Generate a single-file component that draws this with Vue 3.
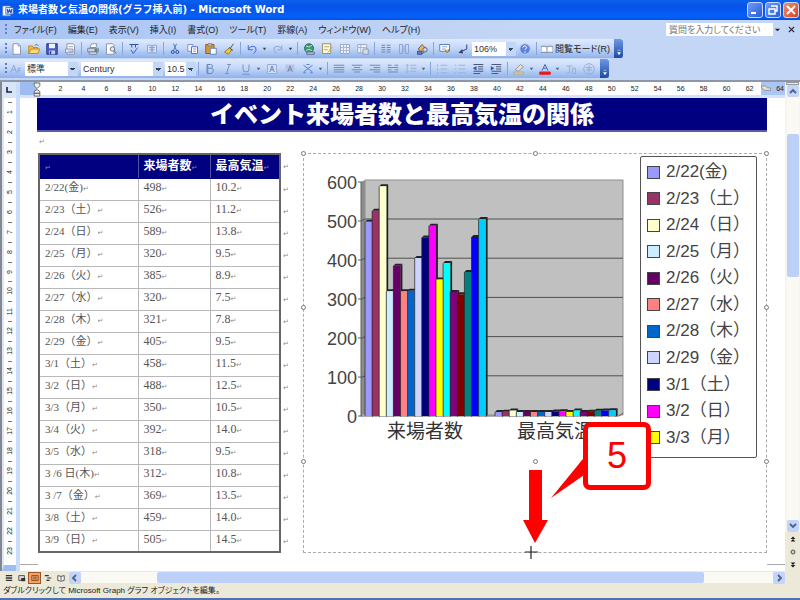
<script setup>
const menus = ['ファイル(F)', '編集(E)', '表示(V)', '挿入(I)', '書式(O)', 'ツール(T)', '罫線(A)', 'ウィンドウ(W)', 'ヘルプ(H)']

const navy = '#2f4f9f'
const faint = '#8ea4d0'

/* Each icon is a list of [path, fill, stroke] drawn on a 16 x 16 grid. */
const icons = {
  new: [['M4 1h7l3 3v11h-10z', '#fff', '#8c94b0'], ['M11 1v3h3', '#dde4f4', '#8c94b0']],
  open: [['M1 14V4h5l1 2h6v8z', '#f2c14a', '#c08a20'], ['M1 14l3-6h12l-3 6z', '#ffd978', '#c08a20'], ['M9 3q3-3 5 1', 'none', '#5b8a4a']],
  save: [['M1 1h14v14h-14z', '#4a5cc0', '#2c3a90'], ['M4 1h8v6h-8z', '#eef2ff', 'none'], ['M4 10h8v5h-8z', '#c4cdf2', 'none'], ['M5 11h2v4h-2z', '#2c3a90', 'none']],
  permission: [['M4 1h8l2 2v12h-10z', '#fff', '#8c94b0'], ['M2 8h10v5h-10z', '#e2e6f0', '#8c94b0'], ['M6 5h6M6 11h6', 'none', '#9aa']],
  print: [['M4 6l2-5h7l-1 5z', '#fff', '#8c94b0'], ['M1 7h14v5h-14z', '#cdd2e0', '#767f9c'], ['M3 12h10v3h-10z', '#e9ecf6', '#767f9c'], ['M10 8h4v4h-4z', '#3d9c58', 'none']],
  preview: [['M2 1h8l2 2v12h-10z', '#fff', '#8c94b0'], ['M7 8a3 3 0 1 0 6 0a3 3 0 1 0-6 0', '#d6ecf8', '#777'], ['M12 10l3 4', 'none', '#a06a30']],
  spell: [['M2 2h12M5 2v4M10 2v4', 'none', navy], ['M4 9l3 5l6-8', 'none', '#3260cc']],
  research: [['M2 3h5v10h-5zM9 3h5v10h-5z', '#dfe5f4', faint], ['M4 6h8M4 9h8', 'none', faint]],
  cut: [['M6 1l4 9M10 1l-4 9', 'none', '#5273b8'], ['M3 12a2 2 0 1 0 4 0a2 2 0 1 0-4 0M9 12a2 2 0 1 0 4 0a2 2 0 1 0-4 0', 'none', '#294a9c']],
  copy: [['M1 2h7v9h-7z', '#eef3ff', '#7e95c8'], ['M6 5h8v9h-8z', '#fff', '#5673b4'], ['M8 8h4M8 11h4', 'none', '#7e95c8']],
  paste: [['M1 2h11v12h-11z', '#d79a2e', '#92601a'], ['M4 1h5v3h-5z', '#dcdcdc', '#777'], ['M7 7h8v8h-8z', '#fff', '#667fb5']],
  brush: [['M14 1l-5 7', 'none', '#70501c'], ['M9 6l3 3l-5 6l-5-3z', '#f2c53d', '#9b7a20'], ['M8 6l5 4', 'none', '#555']],
  undo: [['M3 3v6h6', 'none', '#3465d2'], ['M3 8q5-6 10-2q2 5-3 8', 'none', '#3465d2']],
  redo: [['M13 3v6h-6', 'none', faint], ['M13 8q-5-6-10-2q-2 5 3 8', 'none', faint]],
  link: [['M2 7a6 6 0 1 0 12 0a6 6 0 1 0-12 0', '#3c9a70', '#2d6d70'], ['M4 4q4 3 8-1M4 10q4-3 8 0', 'none', '#b9e4c5'], ['M5 12h10v3h-10z', '#c6cfe0', '#59698c']],
  borders: [['M2 1h11v13h-11z', '#fffbe0', '#9a8f60'], ['M4 5h7M4 9h5', 'none', '#b0a878'], ['M15 5l-6 8', 'none', '#d99a22']],
  table: [['M2 2h12v12h-12z', '#eef1f8', '#9aa8c8'], ['M2 6h12M2 10h12M6 2v12M10 2v12', 'none', '#a9b4d0']],
  sheet: [['M1 2h12v11h-12z', '#eef1f8', '#9aa8c8'], ['M1 6h12M5 2v11', 'none', '#a9b4d0'], ['M8 8h7v7h-7z', '#d9dde6', '#8c98b4']],
  columns: [['M2 3h5M2 6h5M2 9h5M2 12h5M9 3h5M9 6h5M9 9h5M9 12h5', 'none', '#6681bd']],
  direction: [['M2 2h4v12h-4zM10 2h4v12h-4z', 'none', faint], ['M8 3v9', 'none', faint]],
  drawing: [['M3 8l5-6l6 6l-5 6z', '#f2b646', '#6a6070'], ['M2 11h6v4h-6z', '#6a7ed2', '#3b4b90'], ['M9 9a3 3 0 1 0 6 0a3 3 0 1 0-6 0', '#c4d0e8', '#5a668a']],
  map: [['M1 2h13v9h-13z', '#fff', '#5d7cb8'], ['M4 5h7M4 8h5', 'none', '#8ea4d0'], ['M8 9l3 4l3-5', '#f0cd52', '#8b7a30']],
  marks: [['M13 2v6l-9 4', 'none', '#34406a'], ['M7 8l-5 5l6 1z', '#34406a', 'none']],
  help: [['M1 8a7 7 0 1 0 14 0a7 7 0 1 0-14 0', '#5d83dc', '#b8caf0'], ['M5 6q1-3 4-2q3 2-1 5M8 11v2', 'none', '#fff']],
  book: [['M0 5q4-2 8 0q4-2 8 0v8q-4-2-8 0q-4-2-8 0z', '#fff', '#808898'], ['M8 5v8', 'none', '#808898']],
  styles: [['M1 13l4-10l4 10M3 9h5', 'none', '#8aa5dd'], ['M11 13v-6h4M11 10h3', 'none', '#8aa5dd']],
  bold: [['M4 2h5q4 1 1 5q5 2 0 7h-6zM5 7h5M5 3v10', 'none', '#6883bd']],
  italic: [['M7 2h5M10 2l-4 12M4 14h5', 'none', '#7890c4']],
  underline: [['M4 2v6q0 4 4 4q4 0 4-4v-6M3 15h10', 'none', '#7890c4']],
  boxA: [['M2 2h12v12h-12z', '#cfdcf5', '#9aaed8'], ['M5 12l3-8l3 8M6 9h4', 'none', '#7288b8']],
  shadeA: [['M2 2h12v12h-12z', '#b4c3e6', 'none'], ['M5 12l3-8l3 8M6 9h4', 'none', '#7288b8']],
  scale: [['M2 3l12 9M14 3l-12 9', 'none', '#5c7cc4'], ['M6 2h4M2 13h3M11 13h3', 'none', '#5c7cc4']],
  justify: [['M1 3h14M1 6h14M1 9h14M1 12h14', 'none', '#7187b6']],
  center: [['M1 3h14M4 6h8M1 9h14M4 12h8', 'none', '#7187b6']],
  right: [['M1 3h14M6 6h9M1 9h14M6 12h9', 'none', '#7187b6']],
  spread: [['M1 3h5M10 3h5M1 6h14M1 9h5M10 9h5M1 12h14', 'none', '#7187b6']],
  spacing: [['M7 3h8M7 7h8M7 11h8M3 2v11M1 4l2-2l2 2M1 11l2 2l2-2', 'none', '#9fb0d6']],
  numbers: [['M6 3h9M6 8h9M6 13h9M2 2v3M2 7v3M2 12v3', 'none', '#9fb0d6']],
  bullets: [['M6 3h9M6 8h9M6 13h9M1 3h2M1 8h2M1 13h2', 'none', '#9fb0d6']],
  outdent: [['M2 2h13M8 5h7M8 8h7M2 11h13M2 14h9', 'none', '#4a5470'], ['M6 4v6l-5-3z', '#3558b0', 'none']],
  indent: [['M2 2h13M8 5h7M8 8h7M2 11h13M2 14h9', 'none', '#4a5470'], ['M1 4v6l5-3z', '#3558b0', 'none']],
  highlight: [['M3 9l7-7l4 3l-7 6z', '#e8e3c8', '#9097a8'], ['M1 12h13v3h-13z', '#d8cf9c', '#b0ad98']],
  color: [['M4 10l4-8l4 8M6 7h4', 'none', '#4464b0'], ['M1 12h14v3h-14z', '#e81c24', '#e81c24']],
  ruby: [['M2 4h8M6 4v8M3 13h4M10 7h4v7h-4z', 'none', '#98acd6']],
  enclose: [['M1 8a7 7 0 1 0 14 0a7 7 0 1 0-14 0', 'none', '#98acd6'], ['M4 6h8M4 9h8M8 3v10', 'none', '#98acd6']],
}

const standardBar = 'new open save permission | print preview | spell research | cut copy paste brush | undo v redo v | link borders table sheet | columns direction drawing | map marks'.split(' ')
const formatBar = 'bold italic underline v boxA shadeA scale v | justify center right spread spacing v | numbers bullets outdent indent | highlight v color v ruby enclose'.split(' ')

const hTicks = Array.from({ length: 31 }, (_, i) => (i + 1) * 2)
const vTicks = Array.from({ length: 23 }, (_, i) => i + 1)

const rows = [
  ['2/22(金)', 498, '10.2', '#9999ff'],
  ['2/23（土）', 526, '11.2', '#993366'],
  ['2/24（日）', 589, '13.8', '#ffffcc'],
  ['2/25（月）', 320, '9.5', '#ccecff'],
  ['2/26（火）', 385, '8.9', '#660066'],
  ['2/27（水）', 320, '7.5', '#ff8080'],
  ['2/28（木）', 321, '7.8', '#0066cc'],
  ['2/29（金）', 405, '9.5', '#ccd4ff'],
  ['3/1（土）', 458, '11.5', '#000080'],
  ['3/2（日）', 488, '12.5', '#ff00ff'],
  ['3/3（月）', 350, '10.5', '#ffff00'],
  ['3/4（火）', 392, '14.0', '#00ffff'],
  ['3/5（水）', 318, '9.5', '#800080'],
  ['3 /6 日(木)', 312, '10.8', '#800000'],
  ['3 /7（金）', 369, '13.5', '#008080'],
  ['3/8（土）', 459, '14.0', '#0000ff'],
  ['3/9（日）', 505, '14.5', '#00ccff'],
]
const legend = rows.slice(0, 11)

const base = 262
const unit = 0.39
const pitch = 7.1
const bars = [1, 2].flatMap((column, group) =>
  rows.map((row, i) => {
    const h = Math.max(4, Number(row[column]) * unit)
    return { x: 61 + group * 130 + i * pitch, y: base - h, h, color: row[3] }
  })
)
const axis = [0, 100, 200, 300, 400, 500, 600]
const lineY = (v) => base - 2 - v * 0.392
</script>

<template>
  <div class="window">
    <header class="titlebar">
      <svg class="app-icon" viewBox="0 0 16 16"><path d="M1 2h10v13h-10z" fill="#fff" stroke="#6b8fd6" /><path d="M5 4h10v9h-10z" fill="#dce8ff" stroke="#345eb8" /><path d="M7 6l1 5l2-4l2 4l1-5" fill="none" stroke="#2450b0" stroke-width="1.5" /></svg>
      <h1>来場者数と気温の関係(グラフ挿入前) - Microsoft Word</h1>
      <button class="win" aria-label="最小化"><svg viewBox="0 0 14 14"><path d="M3 10h5" stroke="#fff" stroke-width="2" /></svg></button>
      <button class="win" aria-label="元に戻す"><svg viewBox="0 0 14 14"><path d="M5 3h6v5h-2M3 6h6v5h-6z" fill="none" stroke="#fff" stroke-width="1.4" /></svg></button>
      <button class="win close" aria-label="閉じる"><svg viewBox="0 0 14 14"><path d="M3 3l8 8M11 3l-8 8" stroke="#fff" stroke-width="2" /></svg></button>
    </header>

    <nav class="menubar">
      <span class="grip"></span>
      <button v-for="m in menus" :key="m" class="menu">{{ m }}</button>
      <input class="ask" type="text" placeholder="質問を入力してください" aria-label="質問を入力してください" />
      <button class="tiny" aria-label="質問の一覧"><svg viewBox="0 0 8 8"><path d="M1 3h6l-3 3z" fill="#223" /></svg></button>
      <button class="tiny doc-close" aria-label="文書を閉じる"><svg viewBox="0 0 8 8"><path d="M1 1l6 6M7 1l-6 6" stroke="#223" stroke-width="1.4" /></svg></button>
    </nav>

    <div class="bars">
      <div class="toolbar">
        <span class="grip"></span>
        <template v-for="(name, i) in standardBar" :key="i">
          <span v-if="name === '|'" class="sep"></span>
          <button v-else-if="name === 'v'" class="arrow" aria-label="一覧"><svg viewBox="0 0 8 8"><path d="M2 3h4l-2 3z" fill="#345" /></svg></button>
          <button v-else class="tool" :aria-label="name"><svg viewBox="0 0 16 16"><path v-for="(s, k) in icons[name]" :key="k" :d="s[0]" :fill="s[1]" :stroke="s[2]" stroke-width="1.3" /></svg></button>
        </template>
        <select class="combo zoom" aria-label="ズーム"><option>106%</option></select>
        <button class="tool" aria-label="ヘルプ"><svg viewBox="0 0 16 16"><path v-for="(s, k) in icons.help" :key="k" :d="s[0]" :fill="s[1]" :stroke="s[2]" stroke-width="1.3" /></svg></button>
        <span class="sep"></span>
        <button class="reading"><svg viewBox="0 0 16 16"><path v-for="(s, k) in icons.book" :key="k" :d="s[0]" :fill="s[1]" :stroke="s[2]" stroke-width="1.3" /></svg>閲覧モード(R)</button>
        <button class="cap" aria-label="ツールバーのオプション"><svg viewBox="0 0 8 8"><path d="M2 1h4M2 4h4l-2 3z" fill="#fff" stroke="#fff" stroke-width="0.6" /></svg></button>
      </div>
      <div class="toolbar">
        <span class="grip"></span>
        <button class="tool" aria-label="スタイルと書式"><svg viewBox="0 0 16 16"><path v-for="(s, k) in icons.styles" :key="k" :d="s[0]" :fill="s[1]" :stroke="s[2]" stroke-width="1.3" /></svg></button>
        <select class="combo style" aria-label="スタイル"><option>標準</option></select>
        <select class="combo font" aria-label="フォント"><option>Century</option></select>
        <select class="combo size" aria-label="フォント サイズ"><option>10.5</option></select>
        <span class="sep"></span>
        <template v-for="(name, i) in formatBar" :key="i">
          <span v-if="name === '|'" class="sep"></span>
          <button v-else-if="name === 'v'" class="arrow" aria-label="一覧"><svg viewBox="0 0 8 8"><path d="M2 3h4l-2 3z" fill="#567" /></svg></button>
          <button v-else class="tool" :aria-label="name"><svg viewBox="0 0 16 16"><path v-for="(s, k) in icons[name]" :key="k" :d="s[0]" :fill="s[1]" :stroke="s[2]" stroke-width="1.3" /></svg></button>
        </template>
        <button class="cap" aria-label="ツールバーのオプション"><svg viewBox="0 0 8 8"><path d="M2 1h4M2 4h4l-2 3z" fill="#fff" stroke="#fff" stroke-width="0.6" /></svg></button>
      </div>
    </div>

    <div class="workspace">
      <div class="left-rail">
        <button class="tab-kind" aria-label="タブの種類"><svg viewBox="0 0 8 8"><path d="M2 1v5h5" fill="none" stroke="#223" stroke-width="1.6" /></svg></button>
        <div class="vruler">
          <span v-for="n in vTicks" :key="n" class="vtick"><i></i><b>{{ n }}</b></span>
        </div>
      </div>

      <main class="sheet">
        <div class="hruler">
          <div class="margin-left">
            <svg class="marker" viewBox="0 0 8 16"><path d="M1 1h6v3l-3 3l-3-3zM4 8l3 2v2h-6v-2zM1 12h6v3h-6z" fill="#f1efe4" stroke="#666" /></svg>
          </div>
          <div class="ticks"><span v-for="n in hTicks" :key="n">{{ n }}</span></div>
          <div class="margin-right">
            <svg class="marker end" viewBox="0 0 16 10"><path d="M1 1h6l3 3h5v4h-9l-5-4z" fill="#e7e2cc" stroke="#777" /></svg>64
          </div>
        </div>

        <div class="page">
          <h2 class="banner">イベント来場者数と最高気温の関係</h2>
          <p class="blank"><span class="ret">↵</span></p>
          <div class="content">
            <table>
              <thead>
                <tr>
                  <th><span class="ret">↵</span></th>
                  <th>来場者数<span class="ret">↵</span></th>
                  <th>最高気温<span class="ret">↵</span></th>
                  <td class="row-end"><span class="ret">↵</span></td>
                </tr>
              </thead>
              <tbody>
                <tr v-for="r in rows" :key="r[0]">
                  <td>{{ r[0] }}<span class="ret">↵</span></td>
                  <td class="num">{{ r[1] }}<span class="ret">↵</span></td>
                  <td class="num">{{ r[2] }}<span class="ret">↵</span></td>
                  <td class="row-end"><span class="ret">↵</span></td>
                </tr>
              </tbody>
            </table>

            <section class="object">
              <div class="object-body">
                <svg class="plot" viewBox="0 0 336 308" role="img" aria-label="来場者数と最高気温のグラフ">
                  <path d="M57 28l4-2v234l-4 2z" fill="#8c8c8c" />
                  <path d="M61 26h258v235h-258z" fill="#c0c0c0" stroke="#909090" />
                  <path v-for="v in axis.slice(1, 6)" :key="v" :d="`M57 ${lineY(v) + 3}l4-2H319`" fill="none" stroke="#505050" />
                  <path d="M57 28v234h258l4-3" fill="none" stroke="#606060" />
                  <path v-for="v in axis" :key="'t' + v" :d="`M54 ${base - v * unit}h4`" stroke="#606060" />
                  <g v-for="(b, i) in bars" :key="i">
                    <path :d="`M${b.x + 7} ${b.y}l2-2v${b.h + 1}l-2 2z`" fill="#16241c" />
                    <path :d="`M${b.x} ${b.y}l2-2h7l-2 2z`" fill="#222" />
                    <path :d="`M${b.x} ${b.y}h7.2v${b.h}h-7.2z`" :fill="b.color" />
                    <path :d="`M${b.x} ${b.y}v${b.h}`" stroke="#222" stroke-width="0.7" />
                  </g>
                  <text v-for="v in axis" :key="'l' + v" x="53" :y="base - v * unit + 7" text-anchor="end" class="axis">{{ v }}</text>
                  <text x="121" y="284" text-anchor="middle" class="cat">来場者数</text>
                  <text x="251" y="284" text-anchor="middle" class="cat">最高気温</text>
                </svg>
                <ul class="legend">
                  <li v-for="l in legend" :key="l[0]"><span class="swatch" :style="{ background: l[3] }"></span>{{ l[0] }}</li>
                </ul>
              </div>
              <i class="handle tl"></i><i class="handle tc"></i><i class="handle tr"></i>
              <i class="handle ml"></i><i class="handle mr"></i>
              <i class="handle bl"></i><i class="handle bc"></i><i class="handle br"></i>
              <svg class="drag" viewBox="0 0 24 90"><path d="M6 0h13v50h6l-13 23l-12-23h6z" fill="#f00" /><path d="M2 82h13M8 76v13" stroke="#222" stroke-width="1.2" /></svg>
              <div class="callout">
                <svg viewBox="0 0 36 50"><path d="M0 50L36 6v19z" fill="#f00" /></svg>
                <span>5</span>
              </div>
            </section>
          </div>
          <div class="corners"><i></i><i></i></div>
        </div>
      </main>

      <div class="vscroll">
        <button class="split" aria-label="分割"></button>
        <button class="sb" aria-label="上へ"><svg viewBox="0 0 10 10"><path d="M2 7l3-3l3 3" fill="none" stroke="#4d6185" stroke-width="1.8" /></svg></button>
        <div class="vtrack"><div class="vthumb"></div></div>
        <button class="sb" aria-label="下へ"><svg viewBox="0 0 10 10"><path d="M2 3l3 3l3-3" fill="none" stroke="#4d6185" stroke-width="1.8" /></svg></button>
        <button class="browse" aria-label="前へ"><svg viewBox="0 0 10 10"><path d="M5 2l3 3h-6zM2 8l3-3l3 3z" fill="#222" /></svg></button>
        <button class="browse" aria-label="オブジェクトの選択"><svg viewBox="0 0 10 10"><circle cx="5" cy="5" r="2.5" fill="#ccc" stroke="#333" /></svg></button>
        <button class="browse" aria-label="次へ"><svg viewBox="0 0 10 10"><path d="M2 2h6l-3 3zM2 5h6l-3 3z" fill="#222" /></svg></button>
      </div>
    </div>

    <div class="hscroll">
      <button class="view" aria-label="下書き"><svg viewBox="0 0 10 10"><path d="M1 2h8M1 5h8M1 8h8" stroke="#333" stroke-width="1.6" /></svg></button>
      <button class="view" aria-label="Web レイアウト"><svg viewBox="0 0 10 10"><path d="M1 2h7v6h-7z" fill="#ddd" stroke="#333" /><path d="M4 5h5v4h-5z" fill="#333" /></svg></button>
      <button class="view on" aria-label="印刷レイアウト"><svg viewBox="0 0 10 10"><path d="M1 2h8v6h-8zM3 4h4M3 6h4" fill="none" stroke="#6b3d1c" /></svg></button>
      <button class="view" aria-label="アウトライン"><svg viewBox="0 0 10 10"><path d="M1 2h5M4 5h5M3 8h4" stroke="#333" stroke-width="1.4" /></svg></button>
      <button class="view" aria-label="閲覧"><svg viewBox="0 0 10 10"><path d="M1 2l4 1l4-1v6l-4 1l-4-1zM5 3v5" fill="#fff" stroke="#333" /></svg></button>
      <button class="sb left" aria-label="左へ"><svg viewBox="0 0 10 10"><path d="M6 2l-3 3l3 3" fill="none" stroke="#4d6185" stroke-width="1.8" /></svg></button>
      <div class="htrack"><div class="hthumb"></div></div>
      <button class="sb" aria-label="右へ"><svg viewBox="0 0 10 10"><path d="M4 2l3 3l-3 3" fill="none" stroke="#4d6185" stroke-width="1.8" /></svg></button>
    </div>
    <footer class="status">ダブルクリックして Microsoft Graph グラフ オブジェクトを編集。</footer>
  </div>
</template>

<style>
body {
  margin: 0;
  overflow: hidden;
}
</style>

<style scoped>
* {
  box-sizing: border-box;
}
.window {
  display: flex;
  flex-direction: column;
  min-height: 100vh;
  font-family: "Liberation Sans", "Noto Sans CJK JP", sans-serif;
  font-size: 9px;
  color: #222;
  background: #ece9d8;
  border-bottom: 2px solid #4a72b4;
}
button {
  font: inherit;
  color: inherit;
  padding: 0;
  margin: 0;
  border: 0;
  background: none;
  flex: none;
}
svg {
  display: block;
}
.titlebar {
  display: flex;
  align-items: center;
  gap: 2px;
  height: 20px;
  padding: 0 1px 0 2px;
  background: linear-gradient(#0a62f0, #0653e4 30%, #0560fa 85%, #0450d8);
}
.app-icon {
  width: 12px;
  height: 13px;
}
.titlebar h1 {
  flex: 1;
  margin: 0 0 0 2px;
  font-size: 10px;
  font-weight: bold;
  font-family: "DejaVu Sans", "Noto Sans CJK JP", sans-serif;
  line-height: 20px;
  color: #fff;
  white-space: nowrap;
}
.win {
  width: 16px;
  height: 16px;
  border: 1px solid #c8d8ff;
  border-radius: 3px;
  background: linear-gradient(135deg, #6f9cf8, #2a5bd8);
}
.win.close {
  background: linear-gradient(135deg, #f09070, #d8431c);
}
.menubar {
  display: flex;
  align-items: center;
  gap: 11px;
  height: 19px;
  padding: 0 5px 0 4px;
  background: linear-gradient(90deg, #a9c4f4, #c4d6f5 65%);
}
.grip {
  flex: none;
  width: 2px;
  height: 12px;
  margin-left: 1px;
  background: repeating-linear-gradient(#5f7fc0 0 2px, transparent 2px 4px);
}
.menubar .grip {
  margin-right: -4px;
}
.menu {
  font-feature-settings: "palt";
  white-space: nowrap;
}
.ask {
  width: 107px;
  height: 13px;
  margin-left: auto;
  padding: 0 3px;
  border: 0;
  background: #fff;
  font: inherit;
  font-feature-settings: "palt";
  color: #777;
}
.ask::placeholder {
  color: #777;
}
.tiny {
  width: 7px;
  height: 7px;
  margin-left: -10px;
}
.doc-close {
  margin-left: -4px;
}
.bars {
  display: flex;
  flex-direction: column;
  gap: 1px;
  padding-bottom: 2px;
  background: #c4d6f5;
  border-bottom: 2px solid #8d97a8;
}
.toolbar {
  display: flex;
  align-items: center;
  align-self: flex-start;
  height: 19px;
  padding-left: 4px;
  background: linear-gradient(#dfeafd, #c2d6f8 50%, #8fb2ea);
}
.tool {
  width: 18px;
  height: 16px;
}
.tool svg {
  width: 12px;
  height: 12px;
  margin: 0 auto;
}
.arrow {
  width: 8px;
}
.arrow svg {
  width: 7px;
  height: 7px;
}
.sep {
  flex: none;
  width: 1px;
  height: 13px;
  margin: 0 2px;
  background: #88a5da;
}
.combo {
  appearance: none;
  flex: none;
  height: 14px;
  padding: 0 2px;
  border: 0;
  border-radius: 0;
  color: #333;
  font: inherit;
  background: linear-gradient(45deg, transparent 50%, #345 50%) right 5px top 6px / 3px 3px no-repeat,
    linear-gradient(-45deg, transparent 50%, #345 50%) right 2px top 6px / 3px 3px no-repeat,
    linear-gradient(90deg, #fff calc(100% - 10px), #c2d6f8 calc(100% - 10px));
}
.zoom {
  width: 44px;
}
.style {
  width: 53px;
  margin-right: 3px;
}
.font {
  width: 82px;
  margin-right: 2px;
}
.size {
  width: 31px;
}
.reading {
  display: flex;
  align-items: center;
  gap: 2px;
  padding: 0 2px;
  font-feature-settings: "palt";
}
.reading svg {
  width: 12px;
  height: 12px;
}
.cap {
  display: flex;
  align-items: flex-end;
  justify-content: center;
  width: 9px;
  height: 19px;
  margin-left: 2px;
  padding-bottom: 2px;
  border-radius: 0 3px 3px 0;
  background: linear-gradient(#6d98e4, #1c4aa4);
}
.cap svg {
  width: 6px;
  height: 7px;
}
.workspace {
  display: flex;
  flex: 1;
  background: #fff;
}
.left-rail {
  display: flex;
  flex-direction: column;
  width: 20px;
  border-left: 2px solid #85878c;
  border-right: 4px solid #cbdcfa;
  background: #fff;
}
.tab-kind {
  height: 16px;
  padding: 4px 3px;
  background: #d8e4fa;
}
.tab-kind svg {
  width: 8px;
  height: 8px;
}
.vruler {
  flex: 1;
  border-left: 2px solid #dbe6fa;
  border-bottom: 6px solid #9dbdf2;
}
.vtick {
  display: flex;
  flex-direction: column;
  align-items: center;
  justify-content: space-around;
  height: 20px;
}
.vtick i {
  width: 4px;
  height: 1px;
  background: #777;
}
.vtick b {
  writing-mode: vertical-rl;
  transform: rotate(180deg);
  font-size: 7px;
  font-weight: normal;
  line-height: 8px;
}
.sheet {
  display: flex;
  flex: 1;
  flex-direction: column;
  min-width: 0;
}
.hruler {
  display: flex;
  height: 16px;
  font-size: 7px;
  line-height: 13px;
  border-bottom: 3px solid #d5e2f9;
  color: #222;
}
.margin-left {
  display: flex;
  justify-content: flex-end;
  width: 21px;
  background: linear-gradient(90deg, #9dbdf2 17px, #fff 17px);
}
.marker {
  width: 8px;
  height: 15px;
}
.ticks {
  display: flex;
  flex: 1;
  padding-left: 8px;
  margin-right: -6px;
}
.ticks span {
  flex: 1;
  text-align: center;
}
.margin-right {
  display: flex;
  align-items: center;
  justify-content: flex-end;
  gap: 5px;
  width: 24px;
  margin-left: 6px;
  padding-right: 1px;
  background: #a9c6f5;
}
.marker.end {
  width: 14px;
  height: 9px;
}
.page {
  flex: 1;
  padding: 0 18px 0 17px;
}
.banner {
  height: 34px;
  margin: 0;
  border-bottom: 2px solid #5a5ab0;
  background: #000080;
  color: #fff;
  font-family: "Noto Sans CJK JP", sans-serif;
  font-size: 24px;
  font-weight: 900;
  line-height: 29px;
  text-align: center;
  white-space: nowrap;
}
.blank {
  height: 21px;
  margin: 0;
  padding: 4px 0 0 2px;
}
.ret {
  font-family: "DejaVu Sans", sans-serif;
  font-size: 7px;
  font-weight: normal;
  color: #8a8a8a;
}
.content {
  display: flex;
  align-items: stretch;
  padding-left: 1px;
}
table {
  flex: none;
  width: 254px;
  table-layout: fixed;
  border-collapse: collapse;
  font-family: "Liberation Serif", "Noto Sans CJK JP", serif;
  font-size: 11px;
  line-height: 14px;
  color: #555;
}
th,
td {
  height: 22px;
  padding: 0 5px 2px;
  border: 1px solid #b8b8b8;
  text-align: left;
  white-space: nowrap;
}
.num {
  font-size: 12px;
}
th {
  height: 24px;
  padding-bottom: 0;
  border-color: #000080 #5555a5;
  border-top: 2px solid #666;
  background: #000080;
  color: #fff;
  font-family: "Noto Sans CJK JP", sans-serif;
  font-size: 12px;
}
th:nth-child(1) {
  width: 99px;
}
th:nth-child(2) {
  width: 72px;
}
th:nth-child(3) {
  width: 70px;
}
tr > :first-child {
  border-left: 2px solid #666;
}
tr > :nth-child(3) {
  border-right: 2px solid #666;
}
tbody tr:last-child td {
  border-bottom: 2px solid #666;
}
tr > .row-end,
tbody tr:last-child .row-end {
  padding: 0 2px;
  border-top: 0;
  border-right: 0;
  border-bottom: 0;
}
.object {
  position: relative;
  flex: 1;
  margin-left: 11px;
  border: 1px dashed #aaa;
}
.object-body {
  display: flex;
  align-items: flex-start;
  padding-right: 9px;
}
.plot {
  flex: 1;
  min-width: 0;
}
.axis {
  font-size: 18px;
  fill: #444;
}
.cat {
  font-family: "Noto Sans CJK JP", sans-serif;
  font-size: 19px;
  fill: #333;
}
.legend {
  display: flex;
  flex: none;
  flex-direction: column;
  justify-content: space-around;
  width: 117px;
  height: 302px;
  margin: 2px 0 0;
  padding: 2px 0 6px 6px;
  border: 1px solid #555;
  border-radius: 2px;
  background: #fff;
  list-style: none;
  font-size: 17px;
  line-height: 24px;
  color: #444;
  white-space: nowrap;
}
.legend li {
  display: flex;
  align-items: center;
  gap: 6px;
}
.swatch {
  flex: none;
  width: 13px;
  height: 13px;
  border: 1px solid #444;
}
.handle {
  position: absolute;
  width: 5px;
  height: 5px;
  border: 1px solid #777;
  border-radius: 50%;
  background: #fff;
}
.tl,
.ml,
.bl {
  left: -3px;
}
.tc,
.bc {
  left: calc(50% - 2px);
}
.tr,
.mr,
.br {
  right: -3px;
}
.tl,
.tc,
.tr {
  top: -3px;
}
.ml,
.mr {
  top: 151px;
}
.bl,
.bc,
.br {
  top: 305px;
}
.drag {
  position: absolute;
  left: calc(50% - 12px);
  bottom: -8px;
  width: 24px;
  height: 90px;
  overflow: visible;
}
.callout {
  position: absolute;
  right: 115px;
  top: 268px;
  width: 68px;
  height: 68px;
}
.callout svg {
  position: absolute;
  right: 64px;
  top: 26px;
  width: 36px;
  height: 50px;
}
.callout span {
  display: block;
  height: 68px;
  border: 5px solid #f00;
  border-radius: 7px;
  background: #fff;
  color: #f00;
  font-size: 36px;
  line-height: 58px;
  text-align: center;
}
.corners {
  display: flex;
  justify-content: space-between;
  margin: 11px -18px 0 -17px;
}
.corners i {
  width: 18px;
  height: 1px;
  background: #aaa;
}
.vscroll {
  display: flex;
  flex-direction: column;
  align-items: center;
  width: 15px;
  background: #f6f4ec;
}
.split {
  width: 13px;
  height: 3px;
  border: 1px solid #999;
  background: #ece9d8;
}
.sb {
  width: 12px;
  height: 12px;
  border-radius: 2px;
  background: #c3d4fa;
}
.sb svg {
  width: 10px;
  height: 10px;
  margin: 0 auto;
}
.left {
  margin-left: 2px;
}
.vtrack {
  flex: 1;
  width: 12px;
  padding-top: 37px;
  background: #fbf9f4;
}
.vthumb {
  height: 37%;
  border-radius: 2px;
  background: #bdd1f8;
}
.browse {
  width: 15px;
  height: 13px;
  background: #ece9d8;
}
.browse svg {
  width: 8px;
  height: 8px;
  margin: 0 auto;
}
.hscroll {
  display: flex;
  align-items: center;
  height: 13px;
  padding: 0 15px 0 2px;
  background: #ece9d8;
}
.view {
  width: 13px;
  height: 12px;
}
.view svg {
  width: 8px;
  height: 8px;
  margin: 0 auto;
}
.view.on {
  border: 1px solid #a0522d;
  background: #f4a460;
}
.htrack {
  flex: 1;
  height: 11px;
  background: #fbf9f4;
}
.hthumb {
  width: 79%;
  height: 11px;
  margin-left: 11%;
  border-radius: 2px;
  background: #bdd1f8;
}
.status {
  height: 14px;
  padding-left: 3px;
  font-size: 8px;
  line-height: 14px;
  font-feature-settings: "palt";
  white-space: nowrap;
}
</style>
